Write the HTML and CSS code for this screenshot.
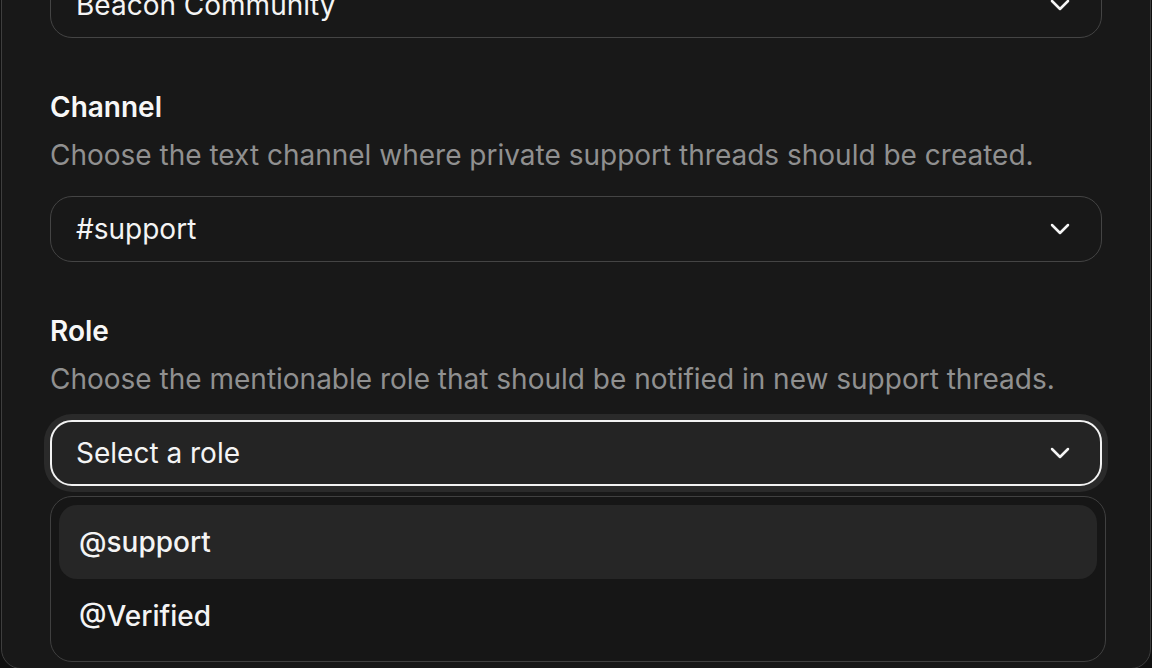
FILE: index.html
```html
<!DOCTYPE html>
<html lang="en">
<head>
<meta charset="utf-8">
<title>Support settings</title>
<link rel="stylesheet" href="styles.css">
</head>
<body>
<div class="page">
  <section class="card">
    <div class="field">
      <div class="label">Server</div>
      <div class="desc">Choose the server where the support bot should run.</div>
      <button class="select" type="button">
        <span class="value">Beacon Community</span>
        <svg class="chev" viewBox="0 0 20 12" width="20" height="12"><path d="M2 2 L10 10 L18 2" fill="none" stroke="currentColor" stroke-width="2.5" stroke-linecap="round" stroke-linejoin="round"/></svg>
      </button>
    </div>
    <div class="field">
      <div class="label">Channel</div>
      <div class="desc">Choose the text channel where private support threads should be created.</div>
      <button class="select" type="button">
        <span class="value">#support</span>
        <svg class="chev" viewBox="0 0 20 12" width="20" height="12"><path d="M2 2 L10 10 L18 2" fill="none" stroke="currentColor" stroke-width="2.5" stroke-linecap="round" stroke-linejoin="round"/></svg>
      </button>
    </div>
    <div class="field">
      <div class="label">Role</div>
      <div class="desc">Choose the mentionable role that should be notified in new support threads.</div>
      <button class="select focused" type="button">
        <span class="value">Select a role</span>
        <svg class="chev" viewBox="0 0 20 12" width="20" height="12"><path d="M2 2 L10 10 L18 2" fill="none" stroke="currentColor" stroke-width="2.5" stroke-linecap="round" stroke-linejoin="round"/></svg>
      </button>
      <ul class="menu">
        <li class="option active">@support</li>
        <li class="option">@Verified</li>
      </ul>
    </div>
  </section>
</div>
</body>
</html>
```

FILE: styles.css
```css
* { box-sizing: border-box; }
html, body {
  margin: 0;
  padding: 0;
  background: #101010;
  height: 668px;
  overflow: hidden;
}
body {
  font-family: Inter, "Noto Sans", "Liberation Sans", sans-serif;
  color: #f4f4f4;
}
.page {
  padding: 0 1px;
}
.card {
  margin-top: -184px;
  background: #181818;
  border: 1.5px solid #3e3e3e;
  border-radius: 20px;
  padding: 48px 48px 6px 48px;
  display: flex;
  flex-direction: column;
  gap: 51px;
}
.field {
  display: flex;
  flex-direction: column;
}
.label {
  font-size: 28px;
  line-height: 36px;
  font-weight: 600;
  color: #f7f7f7;
}
.desc {
  margin-top: 12px;
  font-size: 28px;
  line-height: 36px;
  color: #909090;
}
.select {
  margin-top: 23px;
  height: 66px;
  width: 100%;
  display: flex;
  align-items: center;
  justify-content: space-between;
  padding: 0 31px 0 25px;
  background: #181818;
  border: 1.5px solid #444444;
  border-radius: 22px;
  color: #f4f4f4;
  font-family: inherit;
  font-size: 28px;
  text-align: left;
}
.select .value {
  line-height: 36px;
}
.chev {
  width: 20px;
  height: 12px;
  color: #f4f4f4;
}
.select.focused {
  background: #242424;
  border: 2px solid #f2f2f2;
  padding: 0 30px 0 24px;
  box-shadow: 0 0 0 6px #2a2a2a;
}
.menu {
  list-style: none;
  margin: 10px -4px 0 0;
  padding: 8px 8px 8px 8px;
  background: #161616;
  border: 1.5px solid #404040;
  border-radius: 22px;
}
.option {
  height: 74px;
  display: flex;
  align-items: center;
  padding: 0 20px;
  font-size: 28px;
  font-weight: 500;
  color: #f4f4f4;
  border-radius: 18px;
}
.option.active {
  background: #262626;
}
```
